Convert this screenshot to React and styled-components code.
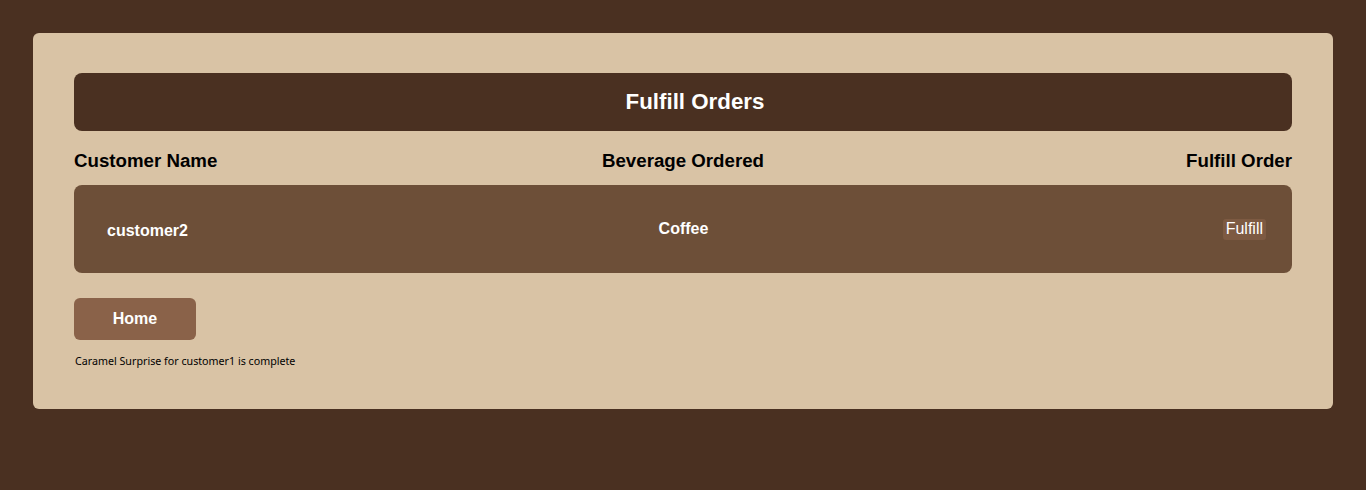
import styled, { createGlobalStyle } from "styled-components";

const GlobalStyle = createGlobalStyle`
  body {
    margin: 0;
    background: #4a3021;
    font-family: "Liberation Sans", Arial, sans-serif;
  }
`;

const orders = [{ customer: "customer2", beverage: "Coffee" }];

function App() {
  return (
    <>
      <GlobalStyle />
      <Page>
        <Card>
          <TitleBar>Fulfill Orders</TitleBar>
          <HeadRow>
            <HeadCell $align="left">Customer Name</HeadCell>
            <HeadCell $align="center">Beverage Ordered</HeadCell>
            <HeadCell $align="right">Fulfill Order</HeadCell>
          </HeadRow>
          {orders.map((o) => (
            <OrderRow key={o.customer}>
              <CustomerCell>{o.customer}</CustomerCell>
              <BeverageCell>{o.beverage}</BeverageCell>
              <ActionCell>
                <FulfillButton>Fulfill</FulfillButton>
              </ActionCell>
            </OrderRow>
          ))}
          <HomeButton>Home</HomeButton>
          <Message>Caramel Surprise for customer1 is complete</Message>
        </Card>
      </Page>
    </>
  );
}

const Page = styled.div`
  padding: 33px;
  height: 490px;
  box-sizing: border-box;
`;

const Card = styled.div`
  background: #d9c3a5;
  border-radius: 6px;
  padding: 40px 41px 41px;
`;

const TitleBar = styled.h1`
  margin: 0;
  height: 58px;
  display: flex;
  align-items: center;
  justify-content: center;
  padding-left: 24px;
  background: #4a3021;
  border-radius: 8px;
  color: #fff;
  font-size: 22.3px;
  font-weight: bold;
`;

const HeadRow = styled.div`
  display: grid;
  grid-template-columns: 1fr 1fr 1fr;
  margin-top: 18px;
  height: 36px;
  padding-top: 1px;
  box-sizing: border-box;
`;

const HeadCell = styled.div`
  text-align: ${(p) => p.$align};
  font-size: 18.7px;
  font-weight: bold;
  color: #000;
`;

const OrderRow = styled.div`
  display: grid;
  grid-template-columns: 1fr 1fr 1fr;
  align-items: center;
  height: 88px;
  background: #6d4f38;
  border-radius: 8px;
  padding: 0 26px 0 33px;
  box-sizing: border-box;
  color: #fff;
  font-size: 16px;
  font-weight: bold;
`;

const CustomerCell = styled.div`
  padding-top: 4px;
`;

const BeverageCell = styled.div`
  text-align: center;
  margin-right: 6px;
`;

const ActionCell = styled.div`
  text-align: right;
`;

const FulfillButton = styled.button`
  background: #7d5a42;
  border: none;
  border-radius: 3px;
  color: #fff;
  font-family: "Liberation Sans", Arial, sans-serif;
  font-size: 16px;
  padding: 1px 3px 2px;
`;

const HomeButton = styled.button`
  display: block;
  margin-top: 25px;
  width: 122px;
  height: 42px;
  background: #8a6249;
  border: none;
  border-radius: 6px;
  color: #fff;
  font-family: "Liberation Sans", Arial, sans-serif;
  font-size: 16px;
  font-weight: bold;
`;

const Message = styled.p`
  margin: 14px 0 0 1px;
  font-family: "Noto Sans", sans-serif;
  font-size: 10.7px;
  color: #000;
`;

export default App;
